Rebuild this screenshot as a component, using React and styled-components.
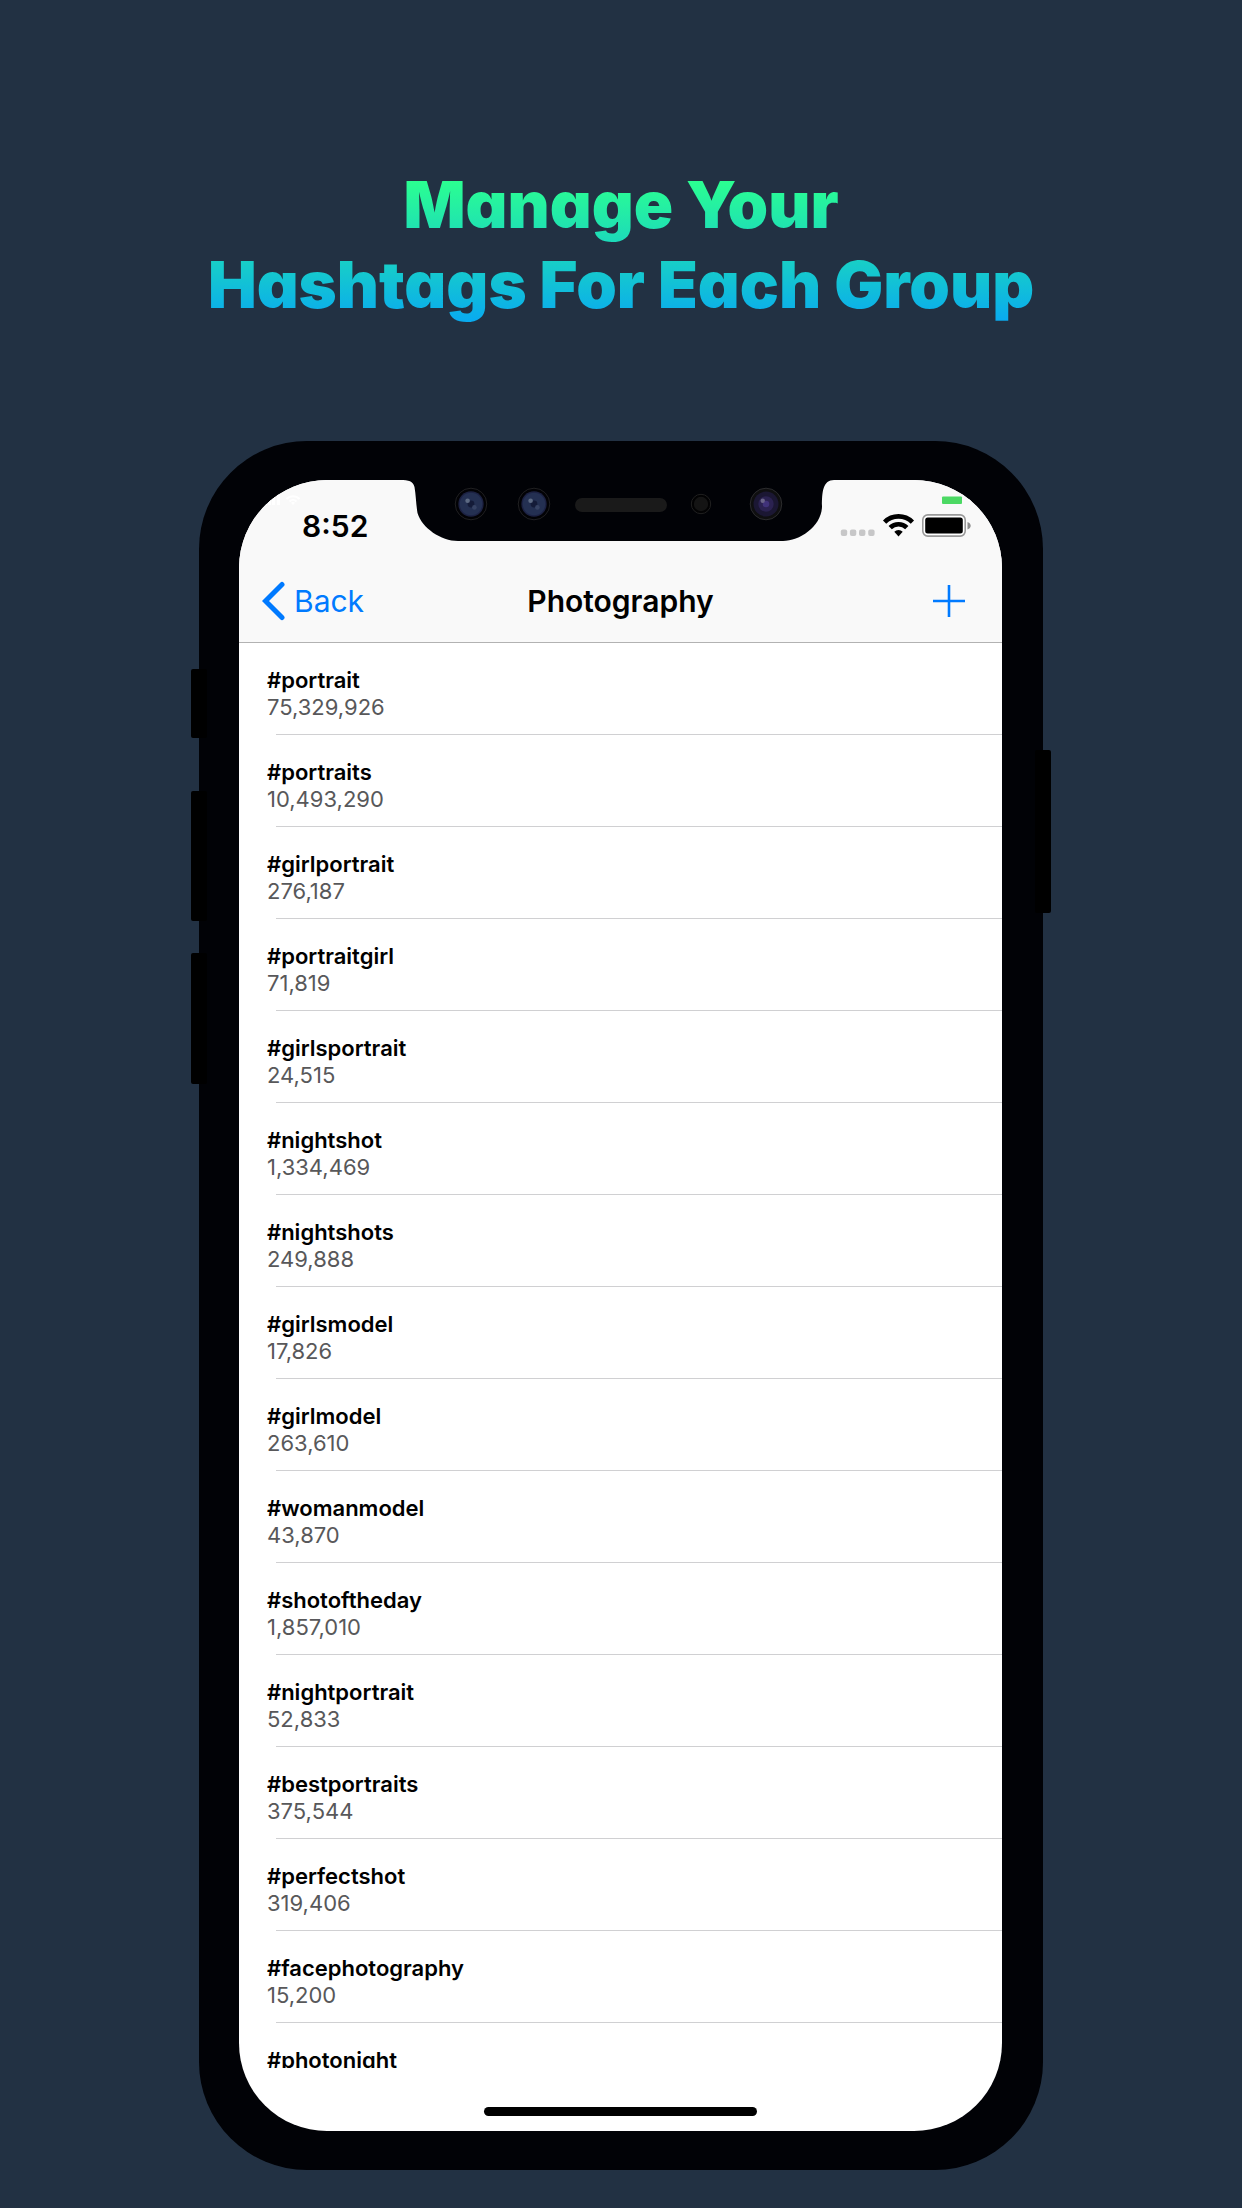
import React from "react";
import styled, { createGlobalStyle } from "styled-components";

const GlobalStyle = createGlobalStyle`
  * { box-sizing: border-box; }
  body {
    margin: 0;
    background: #223143;
    font-family: Inter, "Liberation Sans", sans-serif;
  }
`;

const Page = styled.main`
  min-height: 100vh;
  display: flex;
  flex-direction: column;
  align-items: center;
  padding: 165px 16px 38px;
`;

const Headline = styled.h1`
  margin: 0 0 114px;
  padding-bottom: 2px;
  font-family: Inter, sans-serif;
  font-feature-settings: "cv11";
  font-size: 65px;
  font-weight: 900;
  line-height: 80px;
  text-align: center;
  color: transparent;
  background: linear-gradient(#2bff91 16px, #08a8f2 160px);
  background-clip: text;
  -webkit-background-clip: text;
`;

const Line = styled.span`
  display: block;
`;

const Phone = styled.section`
  position: relative;
  width: 100%;
  max-width: 844px;
  padding: 39px 41px 39px 40px;
  border-radius: 108px;
  background: #010206;
`;

const SideKey = styled.span`
  position: absolute;
  ${(p) => (p.$side === "left" ? "left: -8px;" : "right: -8px;")}
  top: ${(p) => p.$top}px;
  width: 16px;
  height: ${(p) => p.$length}px;
  border-radius: 2px;
  background: #000;
`;

const Screen = styled.div`
  position: relative;
  display: flex;
  flex-direction: column;
  overflow: hidden;
  border-radius: 88px;
  background: #fff;
`;

const Notch = styled.svg`
  position: absolute;
  top: 0;
  left: 50%;
  margin-left: -221px;
  width: 440px;
  height: 64px;
`;

const Header = styled.header`
  background: #f9f9f9;
  border-bottom: 1px solid #b2b2b2;
`;

const StatusBar = styled.div`
  display: flex;
  justify-content: space-between;
  height: 80px;
  padding: 12px 28px 0 24px;
`;

const StatusLeft = styled.div`
  display: flex;
  flex-direction: column;
`;

const Clock = styled.time`
  padding-left: 39px;
  font-size: 30px;
  font-weight: 600;
  line-height: 36px;
  color: #000;
`;

const NavBar = styled.nav`
  display: grid;
  grid-template-columns: 1fr auto 1fr;
  align-items: center;
  height: 82px;
  padding: 0 23px;
`;

const BackButton = styled.button`
  justify-self: start;
  display: flex;
  align-items: center;
  gap: 9px;
  padding: 0;
  border: 0;
  background: none;
  color: #007aff;
  font: 400 30px/40px Inter, sans-serif;
`;

const Title = styled.h2`
  margin: 0;
  font-size: 30px;
  font-weight: 600;
  line-height: 40px;
  color: #000;
`;

const AddButton = styled.button`
  justify-self: end;
  display: flex;
  padding: 0 14px 0 0;
  border: 0;
  background: none;
  color: #007aff;
`;

const TagList = styled.ul`
  margin: 0;
  padding: 0;
  list-style: none;
  height: 1425px;
  overflow: hidden;
`;

const TagRow = styled.li`
  height: 92px;
  padding: 24px 0 0 28px;
  background: linear-gradient(#d0d0d2, #d0d0d2) 37px 100% / 100% 1px no-repeat;
`;

const TagName = styled.div`
  font-size: 22px;
  font-weight: 600;
  line-height: 27px;
  color: #000;
`;

const TagCount = styled.div`
  font-size: 22px;
  line-height: 27px;
  color: #58585a;
`;

const HomeArea = styled.footer`
  display: flex;
  justify-content: center;
  height: 63px;
  padding-top: 39px;
`;

const HomeBar = styled.div`
  width: 273px;
  height: 9px;
  border-radius: 5px;
  background: #000;
`;

const tags = [
  ["#portrait", "75,329,926"],
  ["#portraits", "10,493,290"],
  ["#girlportrait", "276,187"],
  ["#portraitgirl", "71,819"],
  ["#girlsportrait", "24,515"],
  ["#nightshot", "1,334,469"],
  ["#nightshots", "249,888"],
  ["#girlsmodel", "17,826"],
  ["#girlmodel", "263,610"],
  ["#womanmodel", "43,870"],
  ["#shotoftheday", "1,857,010"],
  ["#nightportrait", "52,833"],
  ["#bestportraits", "375,544"],
  ["#perfectshot", "319,406"],
  ["#facephotography", "15,200"],
  ["#photonight", ""],
];

function SensorLens({ x }) {
  return (
    <g>
      <circle cx={x} cy="24" r="15.8" fill="#020205" stroke="#202022" />
      <circle cx={x} cy="24" r="12.7" fill="#1c2142" />
      <circle cx={x} cy="24" r="11.3" fill="#243052" />
      <circle cx={x} cy="24" r="3.4" fill="#141b38" />
      <circle cx={x - 3.4} cy="20.7" r="2.3" fill="#5d6a83" />
      <circle cx={x + 3.4} cy="27.4" r="2.3" fill="#374364" />
    </g>
  );
}

function NotchArt() {
  return (
    <Notch viewBox="0 0 440 64" aria-hidden="true">
      <path
        d="M0 0C9 0 13 1 14.5 7C16 16 16 24 17.5 33C22 48 41 61 58 61H383C400 61 422 46 422 26C422 12 423 0 434 0Z"
        fill="#010206"
      />
      <SensorLens x={71} />
      <SensorLens x={134} />
      <rect x="175" y="18" width="92" height="14" rx="7" fill="#1a1a1a" />
      <circle cx="301" cy="24" r="9.7" fill="#020203" stroke="#202020" />
      <circle cx="301" cy="24" r="7.2" fill="#141414" />
      <circle cx="366" cy="24" r="15.8" fill="#0f0f10" stroke="#2c2c2e" />
      <circle cx="366" cy="24" r="12.5" fill="#1b1733" />
      <circle cx="366" cy="24" r="7.7" fill="#2b2251" />
      <circle cx="366" cy="24" r="3.3" fill="#40327a" />
      <circle cx="362.7" cy="20.7" r="2.2" fill="#6a6488" />
    </Notch>
  );
}

function GhostSignal() {
  return (
    <svg width="40" height="16" viewBox="0 0 40 16" fill="#fff" aria-hidden="true">
      <rect x="1" y="9" width="3" height="4" />
      <rect x="5" y="7" width="3" height="6" />
      <rect x="9" y="5" width="3" height="8" />
      <rect x="14" y="3" width="3" height="10" />
      <g fill="none" stroke="#fff" strokeWidth="2">
        <path d="M23.5 7A9 9 0 0 1 36.5 7" />
        <path d="M26.5 9.5A5 5 0 0 1 33.5 9.5" />
      </g>
      <path d="M30 13L28 10.8A3 3 0 0 1 32 10.8Z" />
    </svg>
  );
}

function StatusIcons() {
  return (
    <svg width="136" height="60" viewBox="0 0 136 60" aria-hidden="true">
      <rect x="104" y="4.5" width="20" height="7.5" rx="1" fill="#4cd964" />
      <path d="M134 4L130.5 8.5H133.5L131.5 12" fill="none" stroke="#fff" />
      <g fill="#c7c7c8">
        <rect x="2.8" y="37.5" width="6.4" height="6.4" rx="2" />
        <rect x="11.9" y="37.5" width="6.4" height="6.4" rx="2" />
        <rect x="21" y="37.5" width="6.4" height="6.4" rx="2" />
        <rect x="30.2" y="37.5" width="6.4" height="6.4" rx="2" />
      </g>
      <g fill="none" stroke="#000" strokeWidth="4.6">
        <path d="M46.6 30.1A19.7 19.7 0 0 1 74.4 30.1" />
        <path d="M52.2 35.7A11.7 11.7 0 0 1 68.8 35.7" />
      </g>
      <path d="M60.5 44.5L56.3 39.8A6 6 0 0 1 64.7 39.8Z" />
      <rect x="84.8" y="22.9" width="42.4" height="21.2" rx="5" fill="#fff" stroke="#999" strokeWidth="1.6" />
      <rect x="87.2" y="25.5" width="37.6" height="16" rx="2.5" />
      <path d="M129.5 30C133.8 31.5 133.8 36 129.5 37.5Z" fill="#8e8e8e" />
    </svg>
  );
}

export default function App() {
  return (
    <>
      <GlobalStyle />
      <Page>
        <Headline>
          <Line>Manage Your</Line>
          <Line>Hashtags For Each Group</Line>
        </Headline>
        <Phone>
          <SideKey $side="left" $top={228} $length={69} />
          <SideKey $side="left" $top={350} $length={130} />
          <SideKey $side="left" $top={512} $length={131} />
          <SideKey $side="right" $top={309} $length={163} />
          <Screen>
            <Header>
              <StatusBar>
                <StatusLeft>
                  <GhostSignal />
                  <Clock>8:52</Clock>
                </StatusLeft>
                <StatusIcons />
              </StatusBar>
              <NavBar>
                <BackButton type="button">
                  <svg
                    width="23"
                    height="40"
                    viewBox="0 0 23 40"
                    fill="none"
                    stroke="currentColor"
                    strokeWidth="5"
                    strokeLinecap="round"
                    aria-hidden="true"
                  >
                    <path d="M20 3.5L3.5 20L20 36.5" />
                  </svg>
                  Back
                </BackButton>
                <Title>Photography</Title>
                <AddButton type="button" aria-label="Add hashtag">
                  <svg width="32" height="32" viewBox="0 0 32 32" stroke="currentColor" strokeWidth="2.6" aria-hidden="true">
                    <path d="M16 0V32M0 16H32" />
                  </svg>
                </AddButton>
              </NavBar>
            </Header>
            <TagList>
              {tags.map(([name, count]) => (
                <TagRow key={name}>
                  <TagName>{name}</TagName>
                  <TagCount>{count}</TagCount>
                </TagRow>
              ))}
            </TagList>
            <HomeArea>
              <HomeBar />
            </HomeArea>
            <NotchArt />
          </Screen>
        </Phone>
      </Page>
    </>
  );
}
